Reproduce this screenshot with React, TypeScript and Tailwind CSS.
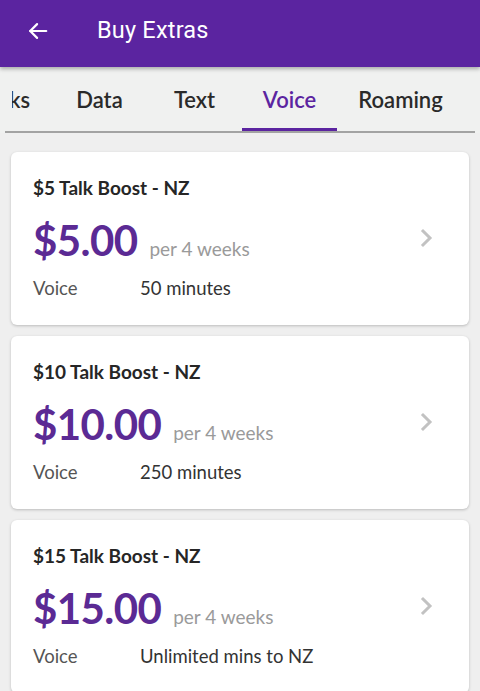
import React from 'react'

const tabs = [
  { label: 'Packs', w: 'w-[40px] overflow-hidden justify-end pr-[22px]' },
  { label: 'Data', w: 'w-[95px] justify-center' },
  { label: 'Text', w: 'w-[95px] justify-center' },
  { label: 'Voice', w: 'w-[95px] justify-center', active: true },
  { label: 'Roaming', w: 'w-[127px] justify-center' },
]

const boosts = [
  { title: '$5 Talk Boost - NZ', price: '$5.00', voice: '50 minutes' },
  { title: '$10 Talk Boost - NZ', price: '$10.00', voice: '250 minutes' },
  { title: '$15 Talk Boost - NZ', price: '$15.00', voice: 'Unlimited mins to NZ' },
]

function Header() {
  return (
    <div className='relative z-10 h-[67px] bg-[#5b24a0] flex items-center pb-[6px] shadow-[0_2px_4px_rgba(0,0,0,0.3)]'>
      <svg className='ml-[27px] w-[22px] h-[22px]' viewBox='0 0 24 24' fill='none' stroke='white' strokeWidth='2.4' strokeLinecap='round' strokeLinejoin='round'>
        <path d='M21 12H3.5' />
        <path d='M11 4.5L3.5 12l7.5 7.5' />
      </svg>
      <span className='ml-[48px] text-white text-[23.5px] font-["Roboto",sans-serif] tracking-[0.2px]'>Buy Extras</span>
    </div>
  )
}

function Tabs() {
  return (
    <div className='bg-[#f0f1f0] px-[5px] overflow-hidden'>
      <div className='border-b-2 border-[#a3a3a3]'>
        <div className='flex ml-[7px] whitespace-nowrap'>
          {tabs.map(t => (
            <div
              key={t.label}
              className={`${t.w} shrink-0 h-[64px] flex items-start pt-[20px] leading-[26px] text-[22px] font-["Lato",sans-serif] font-semibold border-b-[3px] ${t.active ? 'text-[#5b24a0] border-[#5b24a0]' : 'text-[#2a2a2a] border-transparent'}`}
            >
              <span className='shrink-0'>{t.label}</span>
            </div>
          ))}
        </div>
      </div>
    </div>
  )
}

function BoostCard({ title, price, voice }: { title: string; price: string; voice: string }) {
  return (
    <div className='bg-white rounded-[6px] shadow-[0_1px_3px_rgba(0,0,0,0.22)] h-[173px] pl-[22px] pr-[34px] pt-[24px] flex items-center'>
      <div className='flex-1 self-start'>
        <div className='text-[19px] font-bold text-[#262626] leading-[24px]'>{title}</div>
        <div className='flex items-baseline mt-[16px] leading-[48px]'>
          <span className='text-[42px] font-bold text-[#5b2a94] tracking-[-0.6px]'>{price}</span>
          <span className='ml-[12px] text-[19px] text-[#9a9a9a]'>per 4 weeks</span>
        </div>
        <div className='flex text-[18.5px] text-[#333] mt-[3px] leading-[24px]'>
          <span className='w-[107px] text-[#555]'>Voice</span>
          <span>{voice}</span>
        </div>
      </div>
      <svg className='w-[16px] h-[22px] mb-[25px]' viewBox='0 0 16 22' fill='none' stroke='#c2c2c2' strokeWidth='3' strokeLinecap='square'>
        <path d='M4 4l7 7-7 7' />
      </svg>
    </div>
  )
}

export default function App() {
  return (
    <div className='w-[480px] h-[691px] overflow-hidden bg-[#efefef] font-["Lato",sans-serif]'>
      <Header />
      <Tabs />
      <div className='px-[11px] pt-[19px] flex flex-col gap-[11px]'>
        {boosts.map(b => (
          <BoostCard key={b.title} {...b} />
        ))}
      </div>
    </div>
  )
}
